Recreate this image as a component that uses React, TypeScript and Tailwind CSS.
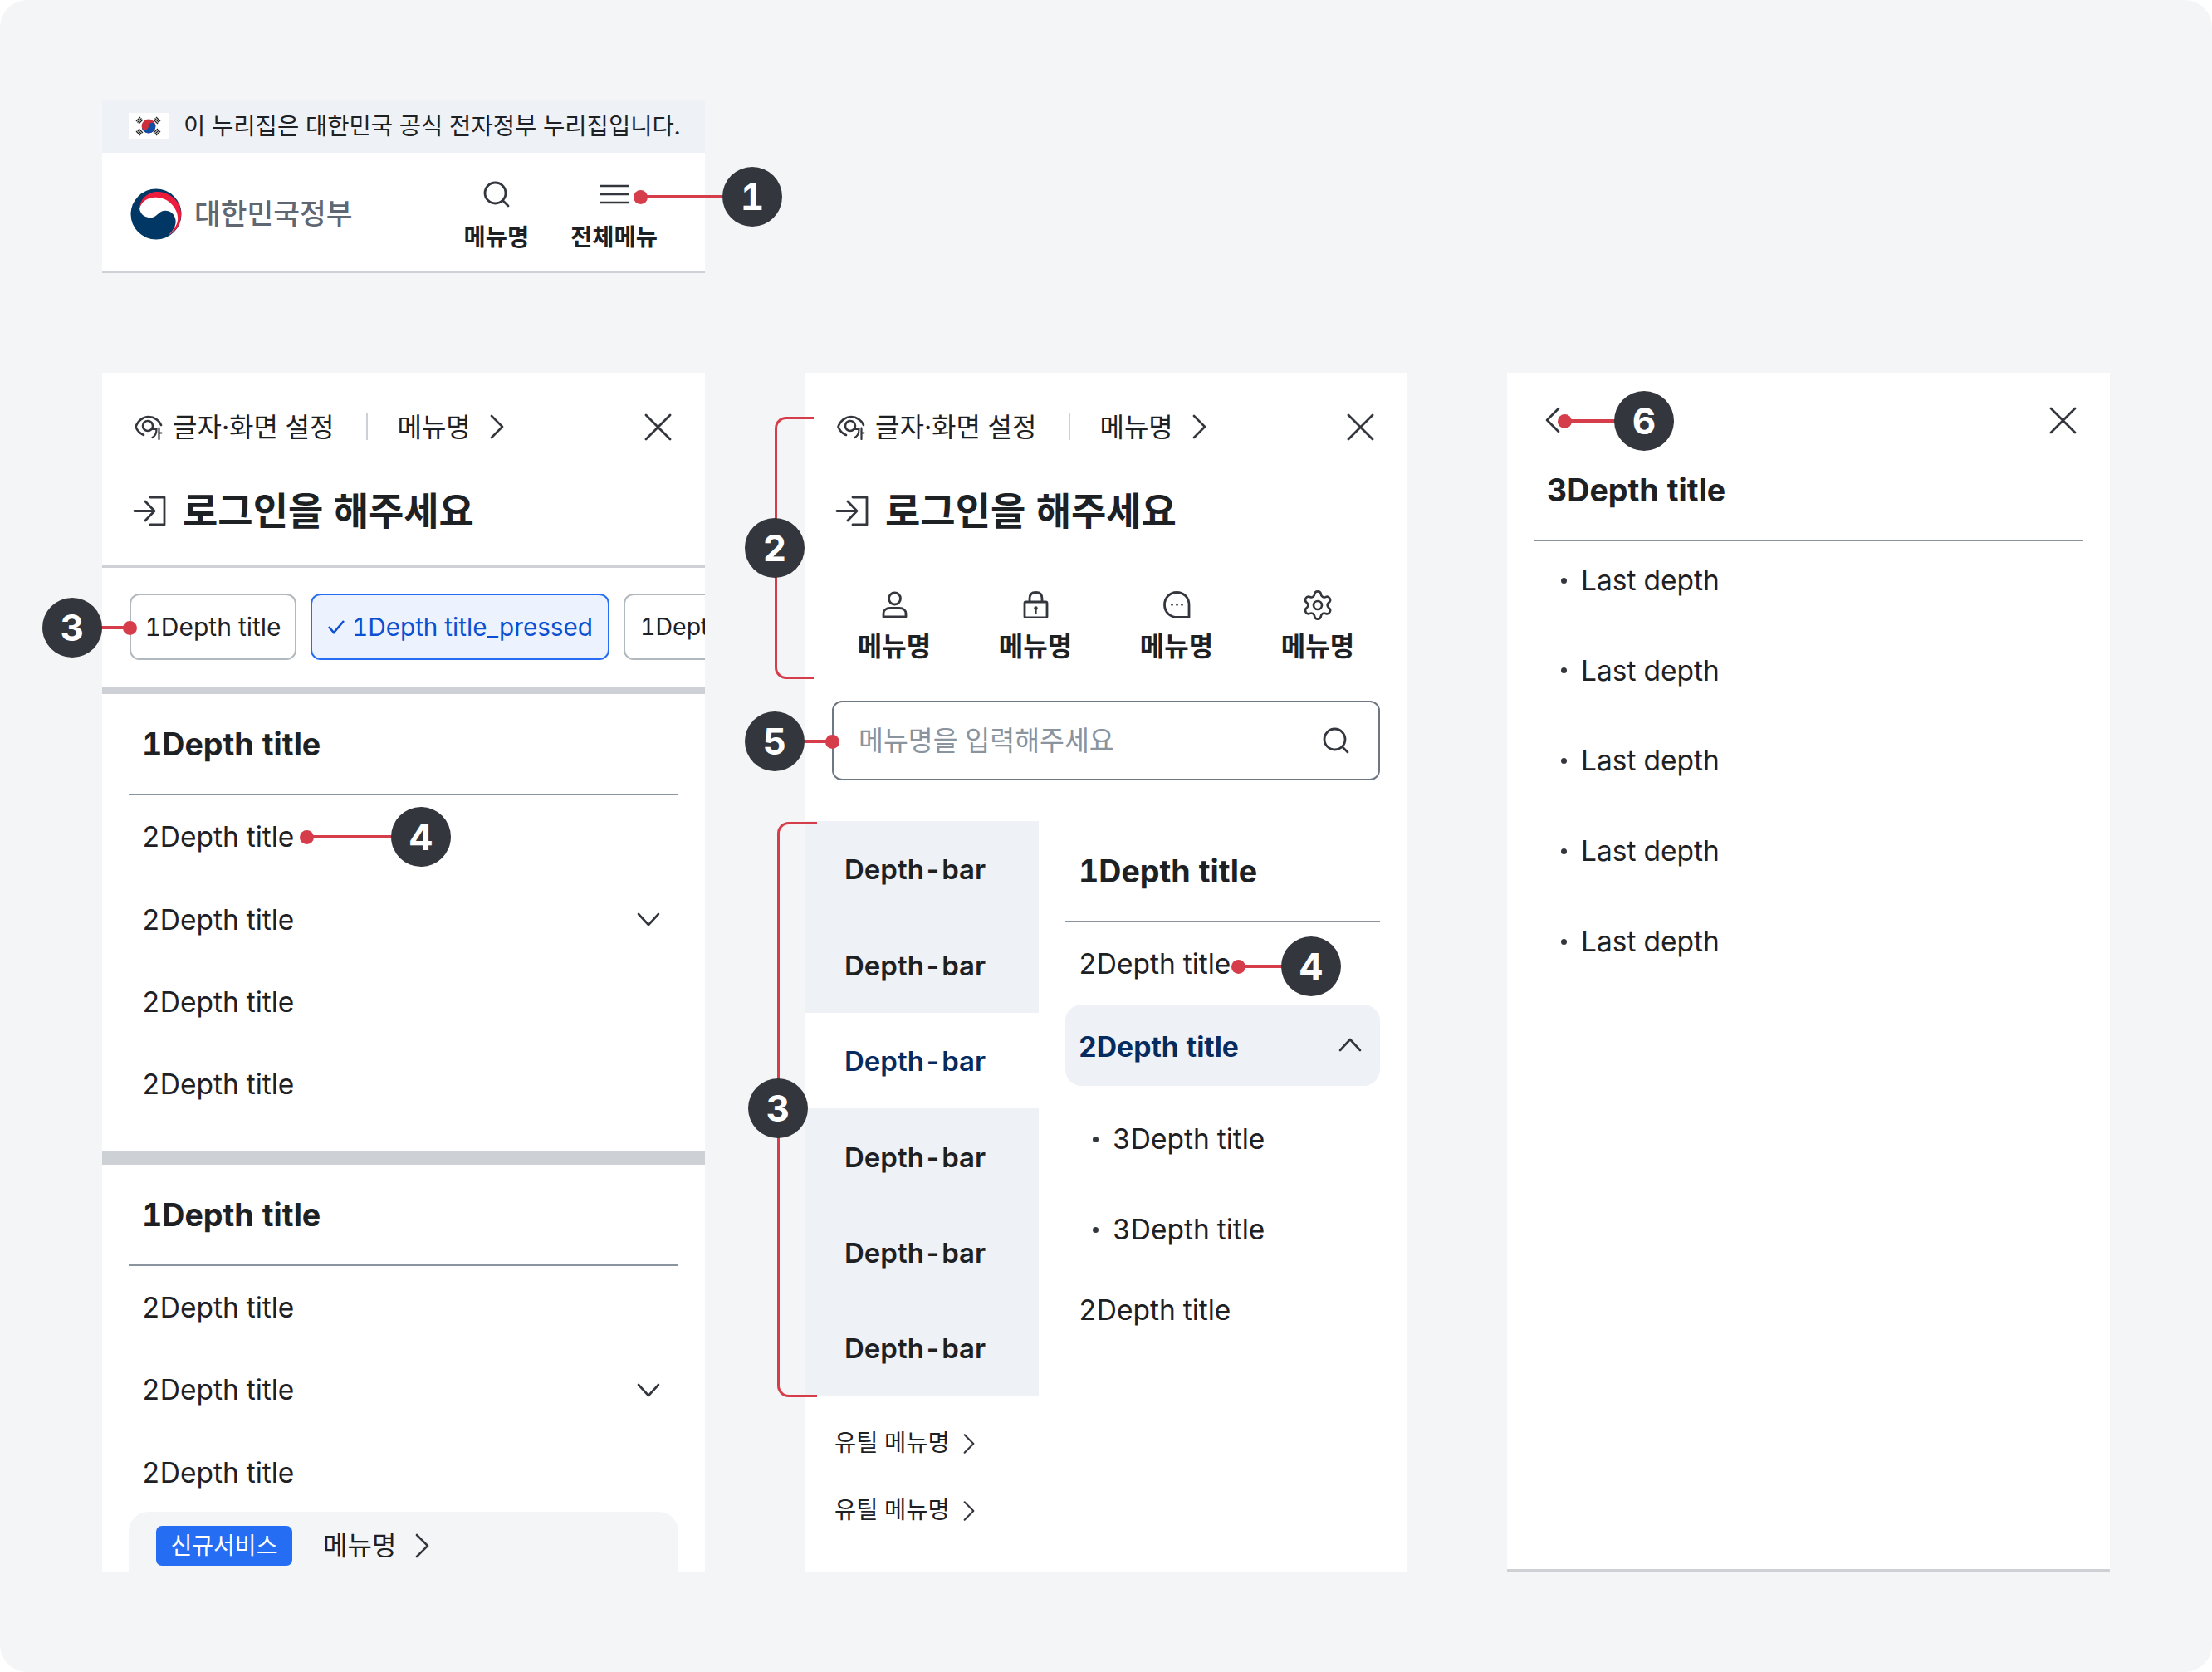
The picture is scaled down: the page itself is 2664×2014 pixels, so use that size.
import React from 'react';
import { Settings } from 'lucide-react';

const ink = 'text-[#1e2124]';

const Chevron = ({ dir = 'right', className = '' }: { dir?: 'right' | 'left' | 'down' | 'up'; className?: string }) => {
  const paths = {
    right: 'M2 2 L15 15 L2 28',
    left: 'M15 2 L2 15 L15 28',
    down: 'M2 2 L14 15 L26 2',
    up: 'M2 15 L14 2 L26 15',
  };
  const box = dir === 'right' || dir === 'left' ? '0 0 17 30' : '0 0 28 17';
  return (
    <svg viewBox={box} fill="none" stroke="#33363d" strokeWidth="2.6" strokeLinecap="round" strokeLinejoin="round" className={className}>
      <path d={paths[dir]} />
    </svg>
  );
};

const CloseIcon = () => (
  <svg viewBox="0 0 33 33" fill="none" stroke="#33363d" strokeWidth="2.8" strokeLinecap="round" className="w-[33px] h-[33px]">
    <path d="M2 2 L31 31 M31 2 L2 31" />
  </svg>
);

const SearchIcon = ({ className = '' }: { className?: string }) => (
  <svg viewBox="0 0 32 32" fill="none" stroke="#33363d" strokeWidth="2.8" strokeLinecap="round" className={className}>
    <circle cx="14.5" cy="14.5" r="12.5" />
    <path d="M24 24 L30 30" />
  </svg>
);

const EyeIcon = () => (
  <svg viewBox="0 0 34 31" className="w-[34px] h-[31px]" fill="none" stroke="#33363d" strokeWidth="2.6" strokeLinecap="round">
    <path d="M11 25 C6 23 3 19 1.5 15 C4 8 10 3 17 3 C24 3 30 8 32 13" />
    <circle cx="16" cy="14" r="6" />
    <path d="M21.5 18 H26.5 C26.5 22 25 26 21.5 28 M29.5 16.5 V30 M29.5 22.5 H32.5" strokeWidth="2.2" />
  </svg>
);

const LoginIcon = () => (
  <svg viewBox="0 0 40 37" fill="none" stroke="#33363d" strokeWidth="2.8" strokeLinecap="round" strokeLinejoin="round" className="w-[40px] h-[37px]">
    <path d="M2 18.5 H25 M15 7 L26 18.5 L15 30" />
    <path d="M21 2 H38 V35 H21" />
  </svg>
);

const FlagIcon = () => (
  <svg viewBox="0 0 48 32" className="w-[48px] h-[32px]">
    <rect width="48" height="32" fill="#fff" />
    <circle cx="24" cy="16" r="8.4" fill="#cd2e3a" />
    <path d="M15.6 16 a8.4 8.4 0 0 0 16.8 0 a4.2 4.2 0 0 0 -8.4 0 a4.2 4.2 0 0 1 -8.4 0" fill="#0f4fa8" />
    <g stroke="#222" strokeWidth="1.3">
      <path d="M9 10 L14 5 M10.5 11.5 L15.5 6.5 M12 13 L17 8" />
      <path d="M33 5 L38 10 M31.5 6.5 L36.5 11.5 M30 8 L35 13" />
      <path d="M9 22 L14 27 M10.5 20.5 L15.5 25.5 M12 19 L17 24" />
      <path d="M33 27 L38 22 M31.5 25.5 L36.5 20.5 M30 24 L35 19" />
    </g>
  </svg>
);

const LogoIcon = () => (
  <svg viewBox="0 0 62 62" className="w-[62px] h-[62px]">
    <circle cx="31" cy="31" r="30.5" fill="#003764" />
    <path d="M11 24 C14 12 26 8 35 9 C50 11 60 26 58 38 C57 46 53 52 46 56 C53 50 56 42 54 36 C52 29 46 26 40 27 C34 28 32 34 26 35 C19 36 12 32 11 24 Z" fill="#fff" />
    <path d="M11 24 C12 10 24 3 34 4 C50 5 62 18 61 32 C61 43 55 52 46 56 C53 50 58 42 57 34 C56 22 44 11 33 11 C22 10 14 15 11 24 Z" fill="#ed1c3c" />
  </svg>
);

const Person = () => (
  <svg viewBox="0 0 33 33" fill="none" stroke="#33363d" strokeWidth="2.8" strokeLinejoin="round" className="w-[33px] h-[33px]">
    <circle cx="16.5" cy="9" r="7" />
    <path d="M3 31 V27 C3 23 6 20.5 11 20.5 H22 C27 20.5 30 23 30 27 V31 Z" />
  </svg>
);

const Lock = () => (
  <svg viewBox="0 0 33 33" fill="none" stroke="#33363d" strokeWidth="2.8" strokeLinejoin="round" className="w-[33px] h-[33px]">
    <rect x="3" y="13" width="27" height="19" rx="1.5" />
    <path d="M9 13 V9 C9 4 12 1.5 16.5 1.5 C21 1.5 24 4 24 9 V13" />
    <circle cx="16.5" cy="20.5" r="2.2" fill="#33363d" stroke="none" />
    <path d="M16.5 21 V27" strokeWidth="2.2" />
  </svg>
);

const Chat = () => (
  <svg viewBox="0 0 33 33" fill="none" stroke="#33363d" strokeWidth="2.8" strokeLinejoin="round" className="w-[33px] h-[33px]">
    <path d="M31 31.5 H17 C8 31.5 1.5 25 1.5 16.5 C1.5 8 8 1.5 16 1.5 C25 1.5 31 8 31 16.5 Z" />
    <circle cx="10.5" cy="16.5" r="1.3" fill="#33363d" stroke="none" />
    <circle cx="16.5" cy="16.5" r="1.3" fill="#33363d" stroke="none" />
    <circle cx="22.5" cy="16.5" r="1.3" fill="#33363d" stroke="none" />
  </svg>
);

// shared top of the menu drawers: settings link, menu link, close, login
const DrawerTop = () => (
  <>
    <div className="h-[130px] pl-[39px] pr-[40px] flex items-center">
      <EyeIcon />
      <span className={`ml-[12px] pt-[2px] text-[32px] ${ink}`}>글자·화면 설정</span>
      <span className="ml-[39px] w-[2px] h-[32px] bg-[#cdd1d5]" />
      <span className={`ml-[35px] pt-[2px] text-[32px] ${ink}`}>메뉴명</span>
      <Chevron className="ml-[23px] w-[17px] h-[30px]" />
      <span className="ml-auto"><CloseIcon /></span>
    </div>
    <div className="h-[72px] pl-[37px] flex items-center">
      <LoginIcon />
      <span className={`ml-[20px] text-[46px] font-bold ${ink}`}>로그인을 해주세요</span>
    </div>
  </>
);

const Row = ({ label, open }: { label: string; open?: boolean }) => (
  <div className={`h-[99.2px] pl-[16px] pr-[22px] flex items-center justify-between text-[33.5px] ${ink}`}>
    <span>{label}</span>
    {open && <Chevron dir="down" className="w-[28px] h-[17px]" />}
  </div>
);

const Section = ({ rows }: { rows: number[] }) => (
  <div className="mx-[32px]">
    <div className={`h-[122px] pl-[16px] pt-[2px] flex items-center border-b-2 border-[#8a949e] text-[37.6px] font-bold ${ink}`}>1Depth title</div>
    <div className="pt-[1px]">
      {rows.map((r, i) => <Row key={i} label="2Depth title" open={r === 1} />)}
    </div>
  </div>
);

const Marker = ({ n, x, y, from }: { n: number; x: number; y: number; from?: number }) => (
  <>
    {from !== undefined && (
      <>
        <span className="absolute h-[4px] bg-[#d63d4a]" style={{ left: Math.min(from, x), top: y - 2, width: Math.abs(x - from) }} />
        <span className="absolute w-[17px] h-[17px] rounded-full bg-[#d63d4a]" style={{ left: from - 8, top: y - 8 }} />
      </>
    )}
    <span
      className="absolute w-[72px] h-[72px] rounded-full bg-[#33363d] text-white text-[44px] font-bold flex items-center justify-center"
      style={{ left: x - 36, top: y - 36 }}
    >
      {n}
    </span>
  </>
);

const Bracket = ({ x, top, bottom, right }: { x: number; top: number; bottom: number; right: number }) => (
  <span
    className="absolute border-l-[3px] border-y-[3px] border-[#d63d4a] rounded-l-[14px]"
    style={{ left: x, top, height: bottom - top, width: right - x }}
  />
);

export default function App() {
  return (
    <div className="bg-white">
      <div className="relative w-[2664px] h-[2014px] rounded-[33px] bg-[#f4f5f7] pl-[123px] pt-[120px] font-[Inter,'Noto_Sans_CJK_KR',sans-serif] tabular-nums overflow-hidden">
        {/* header */}
        <div className="w-[726px] h-[209px] bg-white border-b-[3px] border-[#cdd1d5]">
          <div className={`h-[64px] bg-[#eef1f6] pl-[32px] flex items-center text-[28.6px] ${ink}`}>
            <FlagIcon />
            <span className="ml-[18px]">이 누리집은 대한민국 공식 전자정부 누리집입니다.</span>
          </div>
          <div className="flex items-start pl-[34px]">
            <div className="mt-[43px] flex items-center">
              <LogoIcon />
              <span className="ml-[15px] text-[34.5px] font-medium text-[#5f6872]">대한민국정부</span>
            </div>
            <div className="ml-auto mr-[57px] flex gap-[50px] text-[28.5px] font-bold">
              <div className={`flex flex-col items-center pt-[34px] ${ink}`}>
                <SearchIcon className="w-[32px] h-[32px]" />
                <span className="mt-[15px]">메뉴명</span>
              </div>
              <div className={`flex flex-col items-center pt-[38px] ${ink}`}>
                <svg viewBox="0 0 34 24" fill="none" stroke="#33363d" strokeWidth="2.6" className="w-[34px] h-[24px]">
                  <path d="M0 2 H34 M0 12 H34 M0 22 H34" />
                </svg>
                <span className="mt-[19px]">전체메뉴</span>
              </div>
            </div>
          </div>
        </div>

        <div className="mt-[120px] flex gap-[120px] items-start">
          {/* drawer: chips and menu list */}
          <div className="w-[726px] h-[1444px] bg-white overflow-hidden">
            <DrawerTop />
            <div className="h-[33px] border-b-[3px] border-[#cdd1d5]" />
            <div className={`h-[144px] pl-[33px] pt-[31px] flex gap-[17px] items-start whitespace-nowrap overflow-hidden text-[30px] ${ink}`}>
              <span className="h-[80px] w-[201px] shrink-0 flex items-center justify-center rounded-[12px] border-2 border-[#b1b8be]">1Depth title</span>
              <span className="h-[80px] w-[360px] shrink-0 flex items-center justify-center gap-[8px] rounded-[12px] border-2 border-[#256ef4] bg-[#ecf2fe] text-[#0b50d0] text-[29.7px]">
                <svg viewBox="0 0 22 18" fill="none" stroke="#0b50d0" strokeWidth="2.6" className="w-[22px] h-[18px]">
                  <path d="M2 9 L8 16 L20 2" />
                </svg>
                1Depth title_pressed
              </span>
              <span className="h-[80px] w-[201px] shrink-0 pl-[18px] flex items-center rounded-[12px] border-2 border-[#b1b8be] text-[28.5px]">1Depth title</span>
            </div>
            <div className="h-[8px] bg-[#cdd1d5]" />
            <Section rows={[0, 1, 0, 0]} />
            <div className="mt-[31px] h-[16px] bg-[#cdd1d5]" />
            <Section rows={[0, 1, 0]} />
            <div className="-mt-[2px] mx-[32px] h-[82px] rounded-t-[24px] bg-[#f4f5f7] pl-[33px] pt-[17px] flex items-start">
              <span className="h-[48px] w-[164px] rounded-[7px] bg-[#256ef4] text-white text-[28px] flex items-center justify-center">신규서비스</span>
              <span className={`ml-[37px] h-[48px] flex items-center text-[32px] ${ink}`}>메뉴명</span>
              <span className="ml-[23px] h-[48px] flex items-center"><Chevron className="w-[17px] h-[30px]" /></span>
            </div>
          </div>

          {/* drawer: quick menu, search and depth bar */}
          <div className="w-[726px] h-[1444px] bg-white overflow-hidden">
            <DrawerTop />
            <div className="pt-[61px] flex justify-center">
              {[Person, Lock, Chat].map((Icon, i) => (
                <div key={i} className="w-[170px] flex flex-col items-center">
                  <Icon />
                  <span className={`mt-[12px] text-[32px] leading-[44px] font-bold ${ink}`}>메뉴명</span>
                </div>
              ))}
              <div className="w-[170px] flex flex-col items-center">
                <Settings className="w-[40px] h-[40px] -my-[3.5px] text-[#33363d]" strokeWidth={1.6} />
                <span className={`mt-[12px] text-[32px] leading-[44px] font-bold ${ink}`}>메뉴명</span>
              </div>
            </div>
            <div className="mt-[43px] mx-[33px] h-[96px] rounded-[12px] border-2 border-[#6d7882] pl-[30px] pr-[35px] flex items-center justify-between">
              <span className="pt-[3px] text-[32.5px] text-[#8a949e]">메뉴명을 입력해주세요</span>
              <SearchIcon className="w-[32px] h-[32px]" />
            </div>
            <div className="mt-[49px] flex items-start">
              <div className="w-[282px] grid grid-cols-1 auto-rows-[115.4px] bg-[#eef1f6] text-[33px] font-semibold">
                {[0, 1, 2, 3, 4, 5].map((i) => (
                  <div key={i} className={`pl-[48px] pt-[3px] flex items-center ${i === 2 ? 'bg-white text-[#052b5f]' : ink}`}>Depth-bar</div>
                ))}
              </div>
              <div className="ml-[32px] w-[379px]">
                <div className={`h-[122px] pl-[16px] pt-[2px] flex items-center border-b-2 border-[#8a949e] text-[37.6px] font-bold ${ink}`}>1Depth title</div>
                <div className={`h-[99px] pl-[16px] pt-[1px] flex items-center text-[33.5px] ${ink}`}>2Depth title</div>
                <div className="h-[98px] pl-[16px] pr-[22px] pt-[4px] rounded-[20px] bg-[#eef1f6] flex items-center justify-between text-[33.7px] font-bold text-[#052b5f]">
                  <span>2Depth title</span>
                  <Chevron dir="up" className="w-[28px] h-[17px] -mt-[6px]" />
                </div>
                <div className="mt-[34px] flex flex-col gap-[49px]">
                  {[0, 1].map((i) => (
                    <div key={i} className={`h-[60px] pl-[33px] flex items-center text-[33.5px] ${ink}`}>
                      <span className="w-[7px] h-[7px] rounded-full bg-[#33363d]" />
                      <span className="ml-[17px]">3Depth title</span>
                    </div>
                  ))}
                </div>
                <div className={`mt-[18px] h-[98px] pl-[16px] flex items-center text-[33.5px] ${ink}`}>2Depth title</div>
              </div>
            </div>
            <div className="pt-[17px] pl-[36px]">
              {[0, 1].map((i) => (
                <div key={i} className={`h-[81px] flex items-center text-[28.5px] ${ink}`}>
                  <span>유틸 메뉴명</span>
                  <Chevron className="ml-[16px] w-[14px] h-[26px]" />
                </div>
              ))}
            </div>
          </div>

          {/* drawer: last depth */}
          <div className="w-[726px] h-[1444px] bg-white border-b-[3px] border-[#cdd1d5]">
            <div className="h-[114px] pl-[46px] pr-[40px] flex items-center justify-between">
              <Chevron dir="left" className="w-[18px] h-[32px]" />
              <CloseIcon />
            </div>
            <div className={`mx-[32px] h-[89px] pl-[16px] pb-[30px] flex items-center border-b-2 border-[#8a949e] text-[37.6px] font-bold ${ink}`}>3Depth title</div>
            <div className="pt-[17px] flex flex-col gap-[48.8px]">
              {[0, 1, 2, 3, 4].map((i) => (
                <div key={i} className={`h-[60px] pl-[65px] flex items-center text-[33.5px] ${ink}`}>
                  <span className="w-[7px] h-[7px] rounded-full bg-[#33363d]" />
                  <span className="ml-[17px]">Last depth</span>
                </div>
              ))}
            </div>
          </div>
        </div>

        {/* annotation layer */}
        <Bracket x={933} top={502} bottom={818} right={980} />
        <Bracket x={936} top={990} bottom={1683} right={984} />
        <Marker n={1} x={906} y={237} from={771} />
        <Marker n={2} x={933} y={660} />
        <Marker n={3} x={87} y={756} from={156} />
        <Marker n={3} x={937} y={1335} />
        <Marker n={4} x={507} y={1008} from={369} />
        <Marker n={4} x={1579} y={1164} from={1491} />
        <Marker n={5} x={933} y={893} from={1002} />
        <Marker n={6} x={1980} y={507} from={1884} />
      </div>
    </div>
  );
}
